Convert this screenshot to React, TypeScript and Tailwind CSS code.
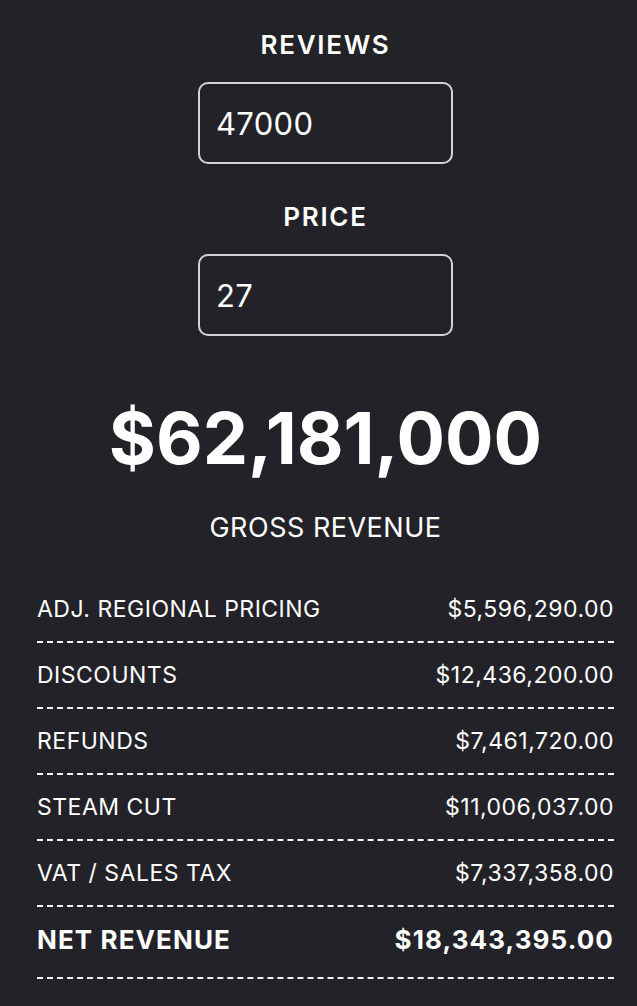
import { useState } from "react";

const rows = [
  { label: "ADJ. REGIONAL PRICING", value: "$5,596,290.00" },
  { label: "DISCOUNTS", value: "$12,436,200.00" },
  { label: "REFUNDS", value: "$7,461,720.00" },
  { label: "STEAM CUT", value: "$11,006,037.00" },
  { label: "VAT / SALES TAX", value: "$7,337,358.00" },
];

const Field = ({
  label,
  value,
  onChange,
  className = "",
}: {
  label: string;
  value: string;
  onChange: (v: string) => void;
  className?: string;
}) => (
  <div className={`flex flex-col items-center ${className}`}>
    <label className="text-[26px] leading-[32px] font-semibold tracking-[1.7px]">{label}</label>
    <input
      value={value}
      onChange={(e) => onChange(e.target.value)}
      className="mt-[21px] w-[255px] h-[82px] rounded-[10px] border-2 border-[#d4d4d8] bg-transparent px-[16px] text-[31px] tracking-[0.3px] text-white outline-none"
    />
  </div>
);

export default function App() {
  const [reviews, setReviews] = useState("47000");
  const [price, setPrice] = useState("27");

  return (
    <div
      className="min-h-screen bg-[#232228] text-white pl-[37px] pr-[23px] pt-[29px]"
      style={{ fontFamily: "Inter, 'Noto Sans', sans-serif" }}
    >
      <Field label="REVIEWS" value={reviews} onChange={setReviews} />
      <Field label="PRICE" value={price} onChange={setPrice} className="mt-[37px]" />

      {/* Gross */}
      <div className="mt-[60px] text-center">
        <div className="text-[72px] leading-[84px] font-bold">$62,181,000</div>
        <div className="mt-[32px] text-[27px] leading-[32px] tracking-[0.5px]">GROSS REVENUE</div>
      </div>

      {/* Breakdown */}
      <div className="mt-[33px]">
        {rows.map((r) => (
          <div
            key={r.label}
            className="flex justify-between items-center py-[18px] border-b-2 border-dashed border-[#f4f4f5] text-[23px] leading-[28px] tracking-[0.5px]"
          >
            <span>{r.label}</span>
            <span>{r.value}</span>
          </div>
        ))}
        <div className="flex justify-between items-center pt-[17px] pb-[21px] border-b-2 border-dashed border-[#f4f4f5] text-[26px] leading-[32px] font-bold tracking-[1.1px]">
          <span>NET REVENUE</span>
          <span>$18,343,395.00</span>
        </div>
      </div>
    </div>
  );
}
